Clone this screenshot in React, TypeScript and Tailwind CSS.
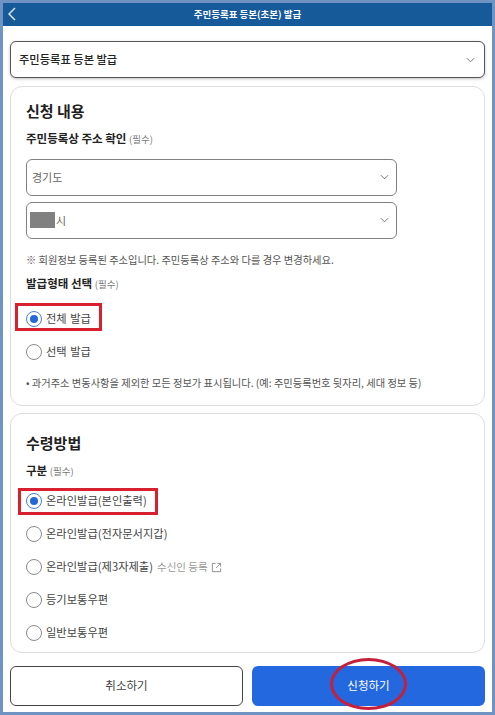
import React from "react";

const font = { fontFamily: '"Noto Sans CJK KR", "Noto Sans", sans-serif' };

function Chevron({ className }: { className: string }) {
  return (
    <svg viewBox="0 0 10 6" className={className} fill="none" stroke="#666" strokeWidth="1">
      <path d="M1 1l4 4 4-4" />
    </svg>
  );
}

function Radio({ checked, label, extra }: { checked?: boolean; label: string; extra?: React.ReactNode }) {
  return (
    <div className="flex h-[33px] items-center">
      <span
        className={
          checked
            ? "flex h-4 w-4 items-center justify-center rounded-full border border-[#4a80d6] bg-white"
            : "flex h-4 w-4 items-center justify-center rounded-full border border-[#8a8a8a] bg-white"
        }
      >
        {checked && <span className="h-2 w-2 rounded-full bg-[#2468d8]" />}
      </span>
      <span className="ml-1 text-[11.25px] leading-none text-[#444] [word-spacing:1px]">{label}</span>
      {extra}
    </div>
  );
}

function AddressSelect({ children }: { children: React.ReactNode }) {
  return (
    <div className="flex h-[37px] w-[371px] items-center justify-between rounded-md border border-[#808080] bg-white pl-[5px] pr-[7px] text-[11px] text-[#666]">
      <span className="flex items-center">{children}</span>
      <Chevron className="h-[6px] w-[9px]" />
    </div>
  );
}

function Label({ text }: { text: string }) {
  return (
    <div className="text-[11.5px] font-bold leading-none text-[#222]">
      {text} <span className="text-[9.5px] font-normal text-[#777]">(필수)</span>
    </div>
  );
}

export default function App() {
  return (
    <div style={font} className="relative h-[715px] w-[495px] overflow-hidden bg-[#6f93c3] p-[3px]">
      <div className="flex h-[709px] flex-col bg-white">
        <header className="relative flex h-[23px] shrink-0 items-center justify-center bg-[#175a99]">
          <svg viewBox="0 0 10 14" className="absolute left-[4px] top-[3px] h-[16px] w-[10px]" fill="none" stroke="#e8eef6" strokeWidth="1.4">
            <path d="M8 1L2 7l6 6" />
          </svg>
          <span className="text-[9.5px] font-bold text-white">주민등록표 등본(초본) 발급</span>
        </header>

        <main className="flex flex-col px-[7px] pt-[15px]">
          <div className="flex h-[37px] items-center justify-between rounded-md border border-[#555] bg-white pl-2 pr-[9px] text-[11.25px] font-medium text-[#222] shadow-[0_1px_3px_rgba(0,0,0,0.25)]">
            <span>주민등록표 등본 발급</span>
            <Chevron className="h-[6px] w-[9px]" />
          </div>

          <section className="mt-2 h-[320px] rounded-xl border border-[#dddddd] px-[15px] pt-[12px]">
            <h2 className="text-[15px] font-bold leading-[24px] text-[#222]">신청 내용</h2>
            <div className="mt-[10px]">
              <Label text="주민등록상 주소 확인" />
            </div>
            <div className="mt-[14px] flex flex-col gap-[6px]">
              <AddressSelect>경기도</AddressSelect>
              <AddressSelect>
                <span className="h-4 w-[25px] -translate-x-[2px] bg-[#808080]" />
                <span className="-ml-[1px]">시</span>
              </AddressSelect>
            </div>
            <p className="mt-[15px] text-[10.25px] leading-[12px] text-[#555]">
              ※ 회원정보 등록된 주소입니다. 주민등록상 주소와 다를 경우 변경하세요.
            </p>
            <div className="mt-[12px]">
              <Label text="발급형태 선택" />
            </div>
            <div className="mt-[13px] flex flex-col">
              <Radio checked label="전체 발급" />
              <Radio label="선택 발급" />
            </div>
            <p className="mt-[9px] text-[10.25px] leading-[12px] text-[#555]">
              • 과거주소 변동사항을 제외한 모든 정보가 표시됩니다. (예: 주민등록번호 뒷자리, 세대 정보 등)
            </p>
          </section>

          <section className="mt-[7px] h-[240px] rounded-xl border border-[#dddddd] px-[15px] pt-[17px]">
            <h2 className="text-[15px] font-bold leading-[24px] text-[#222]">수령방법</h2>
            <div className="mt-[10px]">
              <Label text="구분" />
            </div>
            <div className="mt-[8px] flex flex-col">
              <Radio checked label="온라인발급(본인출력)" />
              <Radio label="온라인발급(전자문서지갑)" />
              <Radio
                label="온라인발급(제3자제출)"
                extra={
                  <span className="ml-[4px] flex items-center gap-[3px] text-[10.5px] text-[#999]">
                    수신인 등록
                    <svg viewBox="0 0 12 12" className="h-[11px] w-[11px]" fill="none" stroke="#888" strokeWidth="1">
                      <path d="M5 1.5H1.5v9h9V7M7 1.5h3.5V5M10.5 1.5L5.5 6.5" />
                    </svg>
                  </span>
                }
              />
              <Radio label="등기보통우편" />
              <Radio label="일반보통우편" />
            </div>
          </section>

          <div className="mt-[13px] flex gap-[9px]">
            <button className="h-10 w-[233px] rounded-md border border-[#444] bg-white text-[11.5px] text-[#444]">취소하기</button>
            <button className="h-10 w-[233px] rounded-md bg-[#2468e0] text-[11.5px] text-white">신청하기</button>
          </div>
        </main>
      </div>

      <div className="absolute left-[15px] top-[303px] h-[28px] w-[87px] border-[3px] border-[#d9202e]" />
      <div className="absolute left-[18px] top-[488px] h-[27px] w-[140px] border-[3px] border-[#d9202e]" />
      <div className="absolute left-[330px] top-[658px] h-[52px] w-[77px] rounded-[50%] border-[3px] border-[#c4203c]" />
    </div>
  );
}
